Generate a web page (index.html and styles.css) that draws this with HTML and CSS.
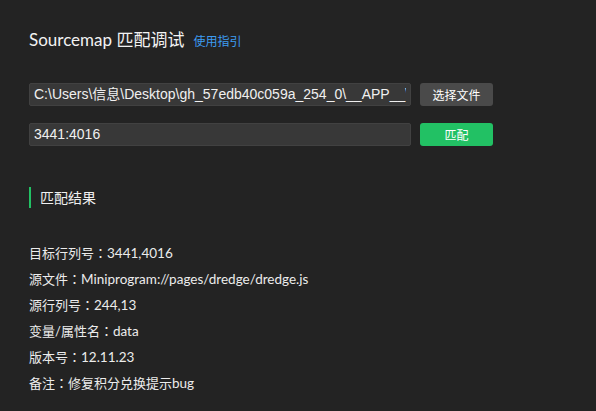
FILE: index.html
```html
<!DOCTYPE html>
<html lang="zh">
<head>
<meta charset="utf-8">
<link rel="stylesheet" href="styles.css">
</head>
<body>
<div class="page">
  <div class="title-row">
    <span class="title">Sourcemap 匹配调试</span>
    <a class="guide">使用指引</a>
  </div>
  <div class="form">
    <div class="row">
      <div class="input"><span class="input-text">C:\Users\信息\Desktop\gh_57edb40c059a_254_0\__APP__\</span></div>
      <button class="btn btn-gray">选择文件</button>
    </div>
    <div class="row">
      <div class="input"><span class="input-text">3441:4016</span></div>
      <button class="btn btn-green">匹配</button>
    </div>
  </div>
  <div class="section-title">匹配结果</div>
  <div class="results">
    <div class="line">目标行列号<span class="colon">：</span><span class="val">3441,4016</span></div>
    <div class="line">源文件<span class="colon">：</span><span class="val">Miniprogram://pages/dredge/dredge.js</span></div>
    <div class="line">源行列号<span class="colon">：</span><span class="val">244,13</span></div>
    <div class="line">变量/属性名<span class="colon">：</span><span class="val">data</span></div>
    <div class="line">版本号<span class="colon">：</span><span class="val">12.11.23</span></div>
    <div class="line">备注<span class="colon">：</span>修复积分兑换提示<span class="val">bug</span></div>
  </div>
</div>
</body>
</html>
```

FILE: styles.css
```css
html, body {
  margin: 0;
  padding: 0;
  background: #232323;
}
body {
  font-family: Lato, "Noto Sans CJK SC", sans-serif;
  color: #ececec;
  width: 596px;
  height: 411px;
  overflow: hidden;
}
.page {
  padding: 28px 29px 0 29px;
}
.title-row {
  display: flex;
  align-items: baseline;
  gap: 9px;
  height: 24px;
  line-height: 24px;
}
.title {
  font-size: 17px;
  color: #f2f2f2;
}
.guide {
  font-size: 12px;
  color: #3d9cf2;
}
.form {
  margin-top: 31px;
  display: flex;
  flex-direction: column;
  gap: 17px;
}
.row {
  display: flex;
  gap: 9px;
  height: 23px;
}
.input {
  width: 382px;
  box-sizing: border-box;
  height: 23px;
  background: #383838;
  border: 1px solid #414141;
  border-radius: 2px;
  padding: 0 4px;
  font-family: "Liberation Sans", "Noto Sans CJK SC", sans-serif;
  font-size: 14px;
  line-height: 21px;
  color: #f0f0f0;
  white-space: nowrap;
  overflow: hidden;
}
.input-text {
  display: block;
  overflow: hidden;
  text-overflow: clip;
}
.btn {
  width: 73px;
  height: 23px;
  border: none;
  border-radius: 3px;
  font-family: "Noto Sans CJK SC", sans-serif;
  font-size: 12px;
  color: #ffffff;
  padding: 0;
}
.btn-gray {
  background: #4a4a4a;
}
.btn-green {
  background: #22c164;
}
.section-title {
  margin-top: 41px;
  height: 21px;
  line-height: 21px;
  border-left: 2px solid #22c164;
  padding-left: 9px;
  font-size: 14px;
  color: #f0f0f0;
}
.results {
  margin-top: 32px;
  font-size: 13px;
}
.line {
  height: 26px;
  line-height: 26px;
  white-space: nowrap;
}
.colon {
  display: inline-block;
  width: 13px;
  text-align: center;
  font-family: "Noto Sans CJK JP", sans-serif;
}
.val {
  font-size: 13.5px;
}
```
